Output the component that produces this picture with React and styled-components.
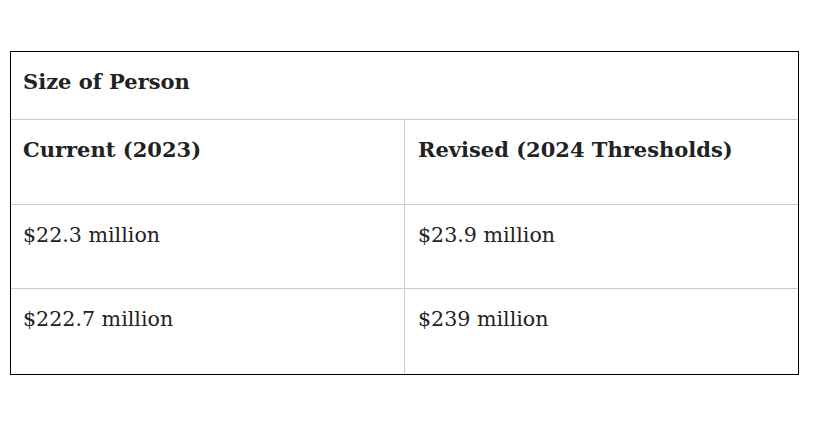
import React from 'react';
import styled, { createGlobalStyle } from 'styled-components';

const GlobalStyle = createGlobalStyle`
  body {
    margin: 0;
    background: #fff;
  }
`;

const Page = styled.div`
  padding: 51px 22px 0 10px;
`;

const Table = styled.table`
  width: 789px;
  table-layout: fixed;
  border-collapse: separate;
  border-spacing: 0;
  border: 1px solid #000;
  font-family: "DejaVu Serif", Georgia, serif;
  color: #222;
`;

const Col = styled.col`
  width: ${p => p.$w};
`;

const Row = styled.tr`
  height: ${p => p.$h}px;
`;

const Cell = styled.td`
  border-top: ${p => (p.$first ? 'none' : '1px solid #ccc')};
  border-left: ${p => (p.$right ? '1px solid #ccc' : 'none')};
  padding: 15px 12px 13px ${p => (p.$right ? 13 : 12)}px;
  vertical-align: top;
  font-size: ${p => (p.$bold ? 21 : 20.6)}px;
  line-height: 30px;
  font-weight: ${p => (p.$bold ? 700 : 400)};
`;

const rows = [
  ['$22.3 million', '$23.9 million', 84],
  ['$222.7 million', '$239 million', 86],
];

export default function App() {
  return (
    <>
      <GlobalStyle />
      <Page>
        <Table>
          <colgroup>
            <Col $w="393px" />
            <Col $w="auto" />
          </colgroup>
          <tbody>
            <Row $h={67}>
              <Cell colSpan={2} $bold $first>Size of Person</Cell>
            </Row>
            <Row $h={85}>
              <Cell $bold>Current (2023)</Cell>
              <Cell $bold $right>Revised (2024 Thresholds)</Cell>
            </Row>
            {rows.map(([a, b, h]) => (
              <Row $h={h} key={a}>
                <Cell>{a}</Cell>
                <Cell $right>{b}</Cell>
              </Row>
            ))}
          </tbody>
        </Table>
      </Page>
    </>
  );
}
